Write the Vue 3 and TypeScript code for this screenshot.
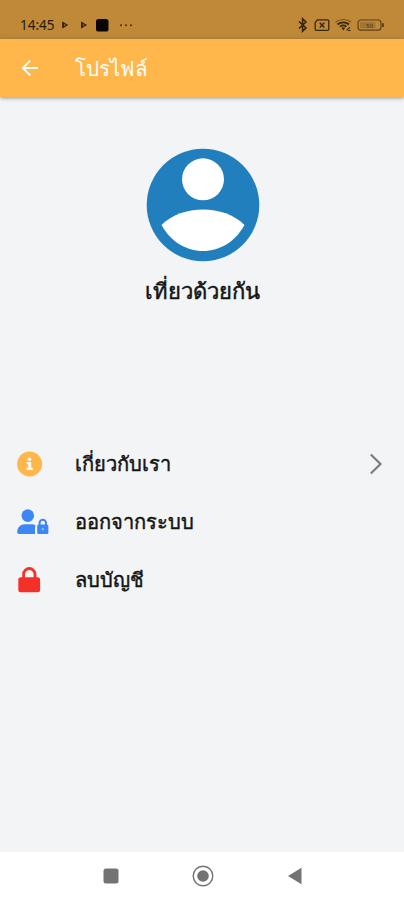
<script setup lang="ts">
interface MenuItem {
  id: 'about' | 'logout' | 'remove'
  label: string
  arrow: boolean
}

const userName: string = 'เที่ยวด้วยกัน'
const items: MenuItem[] = [
  { id: 'about', label: 'เกี่ยวกับเรา', arrow: true },
  { id: 'logout', label: 'ออกจากระบบ', arrow: false },
  { id: 'remove', label: 'ลบบัญชี', arrow: false },
]
</script>

<template>
  <div class="screen">
    <div class="status">
      <span class="clock">14:45</span>
      <svg class="notes" width="76" height="14" viewBox="0 0 76 14">
        <path d="M2.2 3.5v7l6-3.5z" fill="#2c210d" />
        <path d="M4 6l2 1-2 1z" fill="#a87a31" />
        <path d="M21 3.5v7l6-3.5z" fill="#2c210d" />
        <path d="M22.8 6l2 1-2 1z" fill="#a87a31" />
        <rect x="36" y="1" width="12.5" height="12.5" rx="2.6" fill="#090704" />
        <g fill="#3f2f14">
          <circle cx="61" cy="7.2" r="1" />
          <circle cx="66" cy="7.2" r="1" />
          <circle cx="71" cy="7.2" r="1" />
        </g>
      </svg>
      <svg class="signals" width="88" height="16" viewBox="0 0 88 16" fill="none" stroke="#352710">
        <path d="M2 4.5l7 6.500-3.400 3.200V1.800L9 5 2 11.500" stroke-width="1.600" />
        <path d="M20.500 2.800h10q1.300 0 1.300 1.300v8q0 1.300-1.300 1.300h-11q-1.300 0-1.300-1.300V5.500z" stroke-width="1.300" />
        <path d="M22.800 5.800l4.500 4.600m0-4.600l-4.500 4.600" stroke-width="1.500" />
        <path d="M38.500 5q7.800-5 15.500 0" stroke="#6b4e20" stroke-width="1.200" />
        <path d="M40.500 7.400q5.800-4 11.500 0" stroke-width="1.900" />
        <path d="M43 9.600q3.300-2.400 6.500 0" stroke-width="1.600" />
        <path d="M44.300 10.500h4l-2 3z" fill="#352710" stroke="none" />
        <path d="M49.500 13.400l3.500-3M51 13.500h2.500" stroke-width="1.200" />
        <rect x="61" y="3" width="23" height="10.200" rx="3" stroke="#5c431b" stroke-width="1.200" />
        <path d="M86 6.300v3.600" stroke="#4c3714" stroke-width="1.600" />
        <rect x="63" y="5" width="15.500" height="6.200" rx="1" fill="#a27530" stroke="none" />
        <text x="69" y="10.800" class="charge">50</text>
      </svg>
    </div>

    <header class="bar">
      <svg class="back" width="18" height="18" viewBox="0 0 18 18" fill="none" stroke="#fff" stroke-width="1.900">
        <path d="M17 9H2.200M9.200 1.600L1.800 9l7.400 7.400" />
      </svg>
      <h1 class="title">โปรไฟล์</h1>
    </header>

    <main class="content">
      <section class="profile">
        <svg class="avatar" width="114" height="114" viewBox="0 0 114 114">
          <circle cx="57" cy="57" r="56.300" fill="#227fbe" />
          <circle cx="57" cy="31.300" r="21" fill="#fff" />
          <path d="M15.500 77C26 66.500 41 61.500 57 61.500S88 66.500 98.500 77C89.500 93.500 74 103 57 103S24.500 93.500 15.500 77z" fill="#fff" />
        </svg>
        <h2 class="name">{{ userName }}</h2>
      </section>

      <ul class="menu">
        <li v-for="item in items" :key="item.id" class="row">
          <span class="icon">
            <svg v-if="item.id === 'about'" width="26" height="26" viewBox="0 0 26 26">
              <circle cx="12.600" cy="13" r="12.500" fill="#ffb64a" />
              <circle cx="12.500" cy="8.200" r="1.800" fill="#fffaf0" />
              <path d="M9.800 11h4.400v5.800h1.600v2.200H9.500v-2.200h1.700v-3.600H9.800z" fill="#fffaf0" />
            </svg>
            <svg v-else-if="item.id === 'logout'" width="32" height="26" viewBox="0 0 32 26" fill="#3d86f5">
              <circle cx="10.800" cy="6.600" r="6.300" />
              <path d="M0.200 23.300C0.200 18.500 3.500 15.300 8 15.300h6.200c2 0 3.200.500 4.500 1.400-.500.600-.700 1.200-.700 2v6.400H2q-1.800 0-1.800-1.800z" />
              <path d="M22.600 16v-2.100a3.200 3.200 0 0 1 6.400 0V16" fill="none" stroke="#3d86f5" stroke-width="2" />
              <rect x="20.200" y="15.500" width="11.200" height="9.600" rx="1.500" />
              <circle cx="25.800" cy="20.200" r="1.100" fill="#9cc2fb" />
            </svg>
            <svg v-else width="26" height="26" viewBox="0 0 26 26">
              <path d="M6.600 12V7.200a5.700 5.700 0 0 1 11.400 0V12" fill="none" stroke="#f33127" stroke-width="2.800" />
              <rect x="1.300" y="10.300" width="21.800" height="15" rx="2.500" fill="#f33127" />
            </svg>
          </span>
          <span class="label">{{ item.label }}</span>
          <svg v-if="item.arrow" class="chevron" width="14" height="22" viewBox="0 0 14 22" fill="none" stroke="#7b7c7e" stroke-width="2.200">
            <path d="M1.800 1.500L11.500 11l-9.700 9.500" />
          </svg>
        </li>
      </ul>
    </main>

    <nav class="system">
      <svg width="16" height="16" viewBox="0 0 16 16"><rect x=".5" y=".5" width="15" height="15" rx="2.500" fill="#737373" /></svg>
      <svg width="22" height="22" viewBox="0 0 22 22">
        <circle cx="11" cy="11" r="9.800" fill="none" stroke="#737373" stroke-width="1.400" />
        <circle cx="11" cy="11" r="5.800" fill="#737373" />
      </svg>
      <svg width="16" height="18" viewBox="0 0 16 18"><path d="M1 9L14.500.800v16.400z" fill="#737373" /></svg>
    </nav>
  </div>
</template>

<style>
body {
  margin: 0;
  background: #f3f4f6;
}
</style>

<style scoped>
.screen {
  display: flex;
  flex-direction: column;
  height: 900px;
  width: 100%;
  background: #f3f4f6;
  color: #141414;
  font-family: 'Noto Sans', 'Garuda', sans-serif;
}
.status {
  box-sizing: border-box;
  height: 39px;
  flex: none;
  display: flex;
  align-items: center;
  padding: 11px 19px 0 20px;
  background: #bf8938;
}
.clock {
  width: 36px;
  font: 13.5px/18px 'Noto Sans', sans-serif;
  color: #251b0b;
}
.notes {
  margin-left: 4px;
}
.signals {
  margin-left: auto;
}
.charge {
  font: 6px 'Noto Sans', sans-serif;
  fill: #49350f;
  stroke: none;
}
.bar {
  height: 58px;
  flex: none;
  display: flex;
  align-items: center;
  padding-left: 21px;
  background: #ffb64a;
  box-shadow: 0 1px 4px rgba(60, 65, 85, 0.55);
}
.title {
  margin: 0 0 0 36px;
  font-size: 20.5px;
  line-height: 30px;
  font-weight: 400;
  color: #fff;
}
.content {
  flex: 1;
}
.profile {
  box-sizing: border-box;
  height: 338px;
  padding: 51px 0 0 1px;
  display: flex;
  flex-direction: column;
  align-items: center;
}
.name {
  margin: 11px 0 0;
  font-size: 22px;
  line-height: 34px;
  font-weight: 400;
  -webkit-text-stroke: 0.5px #141414;
}
.menu {
  list-style: none;
  margin: 0;
  padding: 0;
}
.row {
  height: 58px;
  display: flex;
  align-items: center;
  padding: 0 21px 0 17px;
}
.icon {
  width: 58px;
  display: flex;
}
.label {
  font-size: 20.1px;
  line-height: 30px;
  -webkit-text-stroke: 0.45px #141414;
}
.chevron {
  margin-left: auto;
}
.system {
  height: 48px;
  flex: none;
  display: flex;
  align-items: center;
  justify-content: center;
  gap: 73px;
  padding-left: 1px;
  background: #fff;
}
</style>
